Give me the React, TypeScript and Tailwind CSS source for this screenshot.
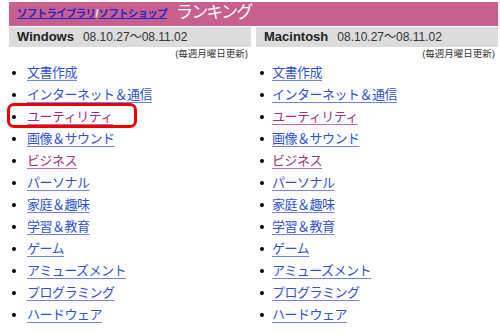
const items = [
  { label: '文書作成' },
  { label: 'インターネット＆通信' },
  { label: 'ユーティリティ', visited: true, mark: true },
  { label: '画像＆サウンド' },
  { label: 'ビジネス', visited: true },
  { label: 'パーソナル' },
  { label: '家庭＆趣味' },
  { label: '学習＆教育' },
  { label: 'ゲーム' },
  { label: 'アミューズメント' },
  { label: 'プログラミング' },
  { label: 'ハードウェア' },
];

const font = "font-['Liberation_Sans','Noto_Sans_CJK_JP',sans-serif]";

function Column({ os, showMark, right }: { os: string; showMark: boolean; right?: boolean }) {
  return (
    <div className="w-[242px] flex flex-col">
      <div className="h-[20px] bg-[#dcdcdc] flex items-center pl-[8px] gap-[9px]">
        <span className="text-[13px] font-bold text-[#222]">{os}</span>
        <span className="text-[12px] text-[#333]">08.10.27〜08.11.02</span>
      </div>
      <div className="text-[9.5px] text-[#333] text-right pr-[3px] mt-[1px] leading-[12px]">
        (毎週月曜日更新)
      </div>
      <ul className="mt-[2px] flex flex-col">
        {items.map((it) => (
          <li key={it.label} className="h-[22px] flex items-center relative">
            <span
              className={
                'w-[4px] h-[4px] rounded-full bg-black ' +
                (right ? 'ml-[4px] mr-[8px]' : 'ml-[3px] mr-[11px]')
              }
            />
            <a
              className={
                'text-[13px] tracking-[-0.5px] underline underline-offset-[3px] ' +
                (it.visited ? 'text-[#a3307f] decoration-[#c86aa8]' : 'text-[#2f52d4] decoration-[#6f86e0]')
              }
            >
              {it.label}
            </a>
            {showMark && it.mark && (
              <span className="absolute left-[-2px] top-[-3px] w-[130px] h-[25px] border-[3px] border-[#ee0000] rounded-[7px]" />
            )}
          </li>
        ))}
      </ul>
    </div>
  );
}

export default function App() {
  return (
    <div className={`w-[500px] h-[334px] bg-white overflow-hidden pt-[2px] pl-[9px] ${font}`}>
      <div className="w-[489px] h-[24px] bg-[#c8608f] flex items-end pl-[8px] pb-[3px]">
        <a className="text-[10.5px] tracking-[-0.7px] font-bold text-[#2626c8] underline mb-[1px]">ソフトライブラリ</a>
        <span className="text-[10.5px] font-bold text-white mb-[1px]">/</span>
        <a className="text-[10.5px] tracking-[-0.7px] font-bold text-[#2626c8] underline mb-[1px]">ソフトショップ</a>
        <span className="text-[17px] tracking-[-1.8px] text-white ml-[9px] leading-[20px]">ランキング</span>
      </div>
      <div className="flex gap-[5px] mt-[1px]">
        <Column os="Windows" showMark />
        <Column os="Macintosh" showMark={false} right />
      </div>
    </div>
  );
}
